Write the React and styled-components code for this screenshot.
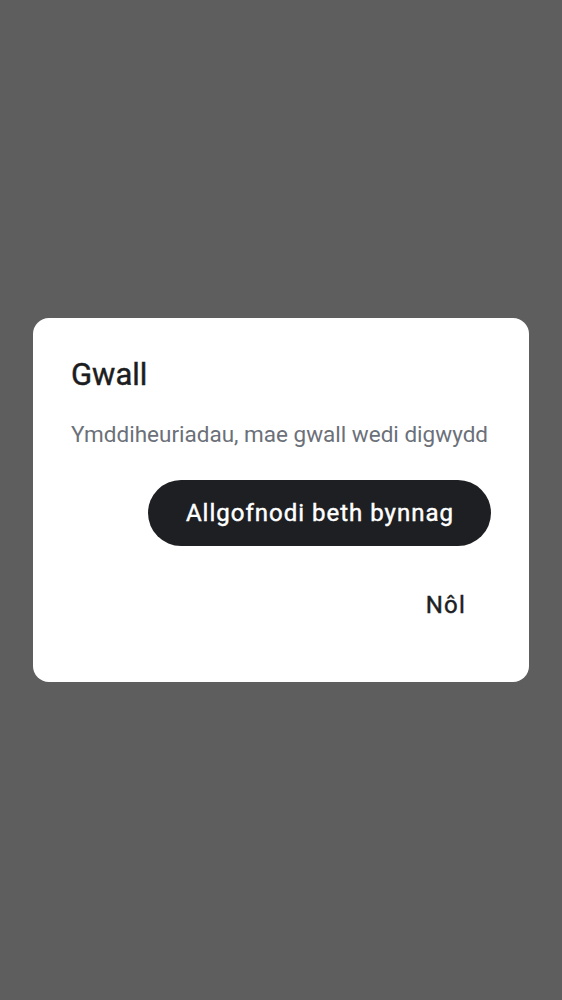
import styled, { createGlobalStyle } from "styled-components";

const GlobalStyle = createGlobalStyle`
  html, body {
    margin: 0;
    padding: 0;
    background: #5e5e5e;
  }
  * {
    box-sizing: border-box;
  }
`;

const Screen = styled.div`
  width: 562px;
  height: 1000px;
  background: #5e5e5e;
  display: flex;
  align-items: center;
  justify-content: center;
  font-family: Roboto, "Noto Sans", sans-serif;
`;

const Dialog = styled.div`
  width: 496px;
  background: #ffffff;
  border-radius: 16px;
  padding: 38px 38px 49px;
  display: flex;
  flex-direction: column;
`;

/* medium weight: the installed Roboto jumps straight to bold, so thicken regular a bit */
const Title = styled.h2`
  margin: 0;
  font-size: 31px;
  line-height: 38px;
  font-weight: 400;
  -webkit-text-stroke: 0.45px #1c1d21;
  color: #1c1d21;
`;

const Message = styled.p`
  margin: 25px 0 0;
  font-size: 22.5px;
  line-height: 30px;
  font-weight: 400;
  color: #6b7079;
`;

const Actions = styled.div`
  margin-top: 31px;
  display: flex;
  flex-direction: column;
  align-items: flex-end;
  gap: 31px;
`;

const Button = styled.button`
  font-family: inherit;
  font-size: 24px;
  font-weight: 400;
  letter-spacing: ${(p) => (p.$filled ? "1px" : "1.2px")};
  height: ${(p) => (p.$filled ? "66px" : "56px")};
  padding: 0 ${(p) => (p.$filled ? "37px 0 38px" : "25px 0 26px")};
  border: none;
  border-radius: 33px;
  background: ${(p) => (p.$filled ? "#1e1f23" : "transparent")};
  color: ${(p) => (p.$filled ? "#ffffff" : "#1e1f23")};
  -webkit-text-stroke: 0.45px ${(p) => (p.$filled ? "#ffffff" : "#1e1f23")};
  cursor: pointer;
`;

export default function App() {
  return (
    <>
      <GlobalStyle />
      <Screen>
        <Dialog>
          <Title>Gwall</Title>
          <Message>Ymddiheuriadau, mae gwall wedi digwydd</Message>
          <Actions>
            <Button $filled>Allgofnodi beth bynnag</Button>
            <Button>Nôl</Button>
          </Actions>
        </Dialog>
      </Screen>
    </>
  );
}
